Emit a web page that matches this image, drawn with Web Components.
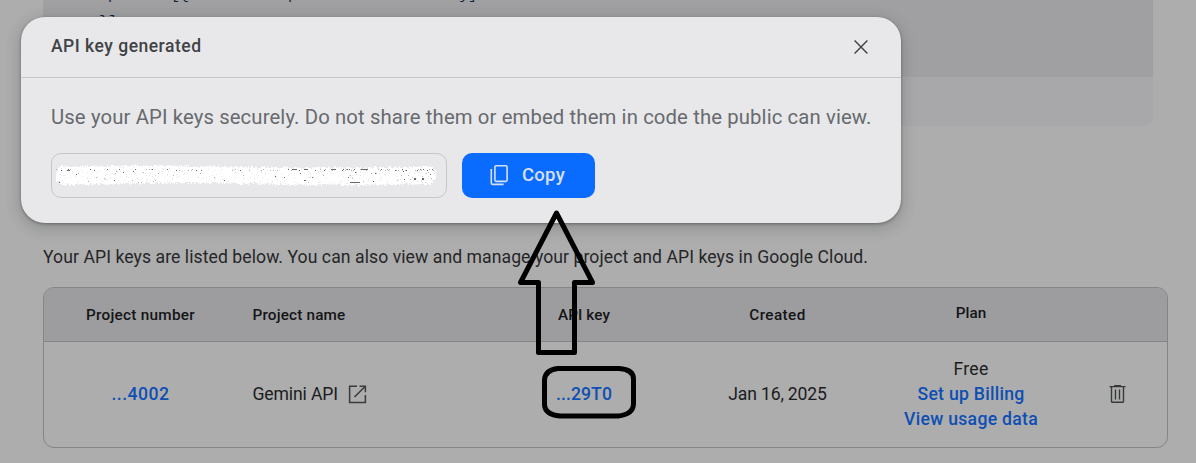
<!DOCTYPE html>
<html lang="en">
<head>
<meta charset="utf-8">
<title>API keys</title>
<style>
html,body{margin:0;height:100%;overflow:hidden;background:#adadad}
body{font-family:Roboto,"Open Sans",sans-serif;color:#1b1c1e}
</style>
</head>
<body>
<keys-page></keys-page>
<script>
const define = (name, html, setup) => customElements.define(name, class extends HTMLElement {
  constructor() {
    super();
    const t = document.createElement('template');
    t.innerHTML = html;
    this.attachShadow({mode: 'open'}).append(t.content.cloneNode(true));
  }
  connectedCallback() { if (setup) setup(this, this.shadowRoot); }
});

// Single line of text tracked out or in to a fixed measure.
define('fit-text', `<style>:host{display:inline-block;white-space:nowrap;flex:none}span{display:inline-block}</style><span><slot></slot></span>`,
  (el, root) => {
    const w = +el.getAttribute('w'), s = root.querySelector('span');
    el.style.width = w + 'px';
    const fit = () => {
      s.style.letterSpacing = '0px';
      const n = el.textContent.length, gap = (w - s.getBoundingClientRect().width) / n;
      s.style.letterSpacing = gap.toFixed(4) + 'px';
    };
    fit();
    requestAnimationFrame(fit);
  });

define('code-panel', `<style>
:host{display:block;margin-right:43px;height:126px;box-sizing:border-box;background:#a8a8aa;border-radius:0 0 10px 10px}
pre{margin:0;height:77px;background:#a0a0a2;color:#0b2340;font:15px/27px "Liberation Mono",monospace;padding-left:56px;overflow:hidden}
div{margin-top:-18px}
</style><pre><div>"parts":[{"text": "Explain how AI works"}]
}]</div></pre>`);

define('open-icon', `<style>:host{display:block;width:19px;height:19px}svg{display:block}</style>
<svg width="19" height="19" viewBox="0 0 20 20" fill="none" stroke="#393b3e" stroke-width="1.6"><path d="M9.5 1.2H1.7V18.3H18.3V10.5M12.2 1.2H18.3V7.6M18 1.5L6.8 12.7"/></svg>`);

define('trash-icon', `<style>:host{display:block;width:17px;height:20px;margin-top:-2px}svg{display:block}</style>
<svg width="17" height="20" viewBox="0 0 17 20" fill="none" stroke="#36383b" stroke-width="1.4"><path d="M.5 2.6H16.5M5 1.6H12M2.5 2.5V17.6Q2.5 18.2 3.1 18.2H13.9Q14.5 18.2 14.5 17.6V2.5M6.5 5.5V15.5M10.5 5.5V15.5"/></svg>`);

define('keys-table', `<style>
:host{display:block;box-sizing:border-box;width:1125px;height:161px;border:1px solid #858587;border-radius:11px;overflow:hidden}
.row{display:grid;grid-template-columns:193px 250px 194px 193px 194px 99px;align-items:center;justify-items:center}
.head{height:53px;background:#9d9d9f;border-bottom:1px solid #858587;font-size:15.3px;font-weight:500;color:#141517}
.body{height:105px;font-size:17.6px;line-height:25px}
.name{justify-self:start;margin-left:15.5px;display:flex;align-items:center;gap:10px}
.plan{display:flex;flex-direction:column;align-items:center}
.head .plan{margin-bottom:4px}
a{color:#0d4fb3;font-weight:500}
</style>
<div class="row head">
<fit-text w="109">Project number</fit-text><div class="name"><fit-text w="93">Project name</fit-text></div>
<fit-text w="52">API key</fit-text><fit-text w="56.5">Created</fit-text><div class="plan"><fit-text w="30.5">Plan</fit-text></div><span></span>
</div>
<div class="row body">
<a><fit-text w="58">...4002</fit-text></a><div class="name"><fit-text w="85.500">Gemini API</fit-text><open-icon></open-icon></div>
<a><fit-text w="56">...29T0</fit-text></a><fit-text w="98.5">Jan 16, 2025</fit-text>
<div class="plan"><fit-text w="35">Free</fit-text><a><fit-text w="107">Set up Billing</fit-text></a><a><fit-text w="134">View usage data</fit-text></a></div>
<trash-icon></trash-icon>
</div>`);

define('redacted-key', `<style>:host{display:block;width:394px;height:43px}svg{display:block}</style>
<svg width="394" height="43" viewBox="52 154 394 43" shape-rendering="crispEdges"></svg>`,
  (el, root) => {
    let seed = 29;
    const r = () => (seed = (seed * 16807) % 2147483647) / 2147483647;
    let white = '', dark = '', grey = '', pale = '';
    for (let x = 56; x < 436; x++) {
      const end = Math.min(x - 56, 435 - x, 5);
      const drift = x > 340 ? 1 : 0;
      const top = Math.round(168 + drift * .5 - Math.sin((x - 50) / 55) + (5 - end) * .9 - r() * 2.6);
      const bot = Math.round(182.5 + drift + Math.sin(x / 40) - (5 - end) * .8 + r() * 2.6);
      white += `M${x} ${top}h1v${bot - top}h-1z`;
      for (let y = top + 1; y < bot; y++) if (r() < .04) pale += `M${x} ${y}h1v1h-1z`;
      const busy = x > 340 ? .6 : .24;
      if (r() < busy) { const y = r() < .55 ? 169 + Math.floor(r() * 2) : 170 + Math.floor(r() * 13); r() < .35 ? dark += `M${x} ${y}h1v1h-1z` : grey += `M${x} ${y}h1v1h-1z`; }
    }
    dark += 'M350 182h10v1h-10zM361 169h7v1h-7zM331 169h5v1h-5zM292 169h5v1h-5zM304 169h4v1h-4zM67 170h2v1h-2zM414 178h2v2h-2zM422 178h2v2h-2z';
    root.querySelector('svg').innerHTML = `<path fill="#fff" d="${white}"/><path fill="#e8e8ea" d="${pale}"/><path fill="#b4b6b8" d="${grey}"/><path fill="#66696d" d="${dark}"/>`;
  });

define('copy-button', `<style>
:host{display:flex;box-sizing:border-box;width:133px;height:45px;padding:0 0 1px 27.500px;align-items:center;gap:13.500px;background:#0a6cff;border-radius:10px;color:#d8dfee;font-size:18.5px;font-weight:500}
svg{display:block}
</style>
<svg width="19" height="22" viewBox="0 0 19 22" fill="none" stroke="currentColor" stroke-width="1.6"><rect x="4.9" y="1.8" width="12.2" height="15.6" rx="1.3"/><path d="M1.3 5V18.9Q1.3 20.4 2.8 20.4H13.6"/></svg>
<slot></slot>`);

define('key-dialog', `<style>
:host{display:block;position:absolute;left:21px;top:17px;width:880px;height:206px;background:#e8e8ea;border-radius:24px;box-shadow:0 1px 3px rgba(0,0,0,.32),0 4px 14px 2px rgba(50,60,55,.24)}
header{display:flex;align-items:center;justify-content:space-between;height:60px;padding:0 33px 0 30px;border-bottom:1px solid #c6c7c9;color:#404246;font-size:17.5px;font-weight:500}
header fit-text{margin-top:-2px}
header svg{margin-top:-1px}
p{margin:25px 0 0 30px;line-height:28px;font-size:20.3px;color:#676a6e}
.row{display:flex;gap:15px;margin:22px 0 0 30px}
.field{border:1px solid #c5c6c8;border-radius:10px;width:394px;height:43px}
</style>
<header><fit-text w="150.5">API key generated</fit-text>
<svg width="14" height="14" viewBox="0 0 14 14" stroke="#3e4145" stroke-width="1.4"><path d="M.6.6L13.4 13.4M13.4.6L.6 13.4"/></svg></header>
<p><fit-text w="820.5">Use your API keys securely. Do not share them or embed them in code the public can view.</fit-text></p>
<div class="row"><div class="field"><redacted-key></redacted-key></div><copy-button><fit-text w="43">Copy</fit-text></copy-button></div>`);

// Hand-drawn pointer and ring over the page.
define('pen-marks', `<style>:host{display:block;position:absolute;inset:0;pointer-events:none}svg{display:block}</style>
<svg width="1196" height="463" fill="none" stroke="#000" stroke-width="5" stroke-linejoin="round"><path d="M556.5 213L520.5 282.5H538.5V352.5H574.5V282.5H592.5Z"/><path d="M558 368.5H619Q633.5 369.500 633.500 379V404Q633 414.500 618 416H560Q544.500 414.500 544.500 404V380Q545 370 558 368.500Z"/></svg>`);

define('keys-page', `<style>
:host{display:block;position:relative;box-sizing:border-box;width:1196px;height:463px;padding-left:43px;overflow:hidden;background:#adadad}
.intro{margin:118px 0 16px;line-height:27px;font-size:17.6px;color:#252628}
</style>
<code-panel></code-panel>
<div class="intro"><fit-text w="825">Your API keys are listed below. You can also view and manage your project and API keys in Google Cloud.</fit-text></div>
<keys-table></keys-table>
<key-dialog></key-dialog>
<pen-marks></pen-marks>`);
</script>
</body>
</html>
